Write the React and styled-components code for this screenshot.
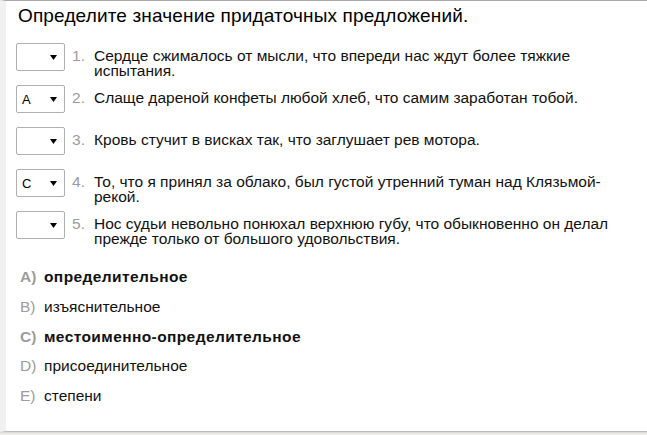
import React from 'react'
import styled, { createGlobalStyle } from 'styled-components'

const GlobalStyle = createGlobalStyle`
    html, body {
        margin: 0;
        padding: 0;
        background: #ffffff;
    }
    body {
        font-family: "Liberation Sans", Arial, sans-serif;
        color: #000;
    }
`

const questions = [
    { value: '', text: 'Сердце сжималось от мысли, что впереди нас ждут более тяжкие испытания.' },
    { value: 'A', text: 'Слаще дареной конфеты любой хлеб, что самим заработан тобой.' },
    { value: '', text: 'Кровь стучит в висках так, что заглушает рев мотора.' },
    { value: 'C', text: 'То, что я принял за облако, был густой утренний туман над Клязьмой-рекой.' },
    { value: '', text: 'Нос судьи невольно понюхал верхнюю губу, что обыкновенно он делал прежде только от большого удовольствия.' },
]

const answers = [
    { key: 'A', text: 'определительное', used: true },
    { key: 'B', text: 'изъяснительное', used: false },
    { key: 'C', text: 'местоименно-определительное', used: true },
    { key: 'D', text: 'присоединительное', used: false },
    { key: 'E', text: 'степени', used: false },
]

export default function App() {
    return (
        <>
            <GlobalStyle />
            <Page>
                <Panel>
                    <Title>Определите значение придаточных предложений.</Title>
                    <QuestionList>
                        {questions.map((q, i) => (
                            <QuestionRow key={i}>
                                <SelectBox>
                                    <SelectValue>{q.value}</SelectValue>
                                    <Arrow viewBox="0 0 7 5" width="7" height="5">
                                        <path d="M0 0 L7 0 L3.5 5 Z" fill="#000" />
                                    </Arrow>
                                </SelectBox>
                                <Number>{i + 1}.</Number>
                                <QuestionText>{q.text}</QuestionText>
                            </QuestionRow>
                        ))}
                    </QuestionList>
                    <AnswerList>
                        {answers.map(a => (
                            <AnswerRow key={a.key} $used={a.used}>
                                <AnswerKey>{a.key})</AnswerKey>
                                <span>{a.text}</span>
                            </AnswerRow>
                        ))}
                    </AnswerList>
                </Panel>
                <Footer />
            </Page>
        </>
    )
}

const Page = styled.div`
    height: 435px;
    display: flex;
    flex-direction: column;
    overflow: hidden;
`

const Panel = styled.div`
    flex: 1;
    border-top: 1px solid #a9a9a9;
    border-left: 6px solid #f1f1f1;
    border-bottom: 1px solid #bcbcbc;
    padding: 4px 0 0 12px;
`

const Footer = styled.div`
    height: 3px;
    background: linear-gradient(#dadada 0 1px, #ebebe3 1px);
`

const Title = styled.h1`
    margin: 0;
    font-size: 19px;
    letter-spacing: 0.15px;
    font-weight: 400;
    line-height: 22px;
`

const QuestionList = styled.div`
    margin-top: 16px;
    margin-left: -2px;
    display: flex;
    flex-direction: column;
    gap: 14px;
`

const QuestionRow = styled.div`
    display: flex;
    align-items: flex-start;
    min-height: 28px;
`

const SelectBox = styled.div`
    box-sizing: border-box;
    width: 49px;
    height: 28px;
    flex-shrink: 0;
    border: 1px solid #b0b0b0;
    border-radius: 2px;
    display: flex;
    align-items: center;
    justify-content: space-between;
    padding: 1px 7px 0 5px;
    font-size: 13px;
`

const SelectValue = styled.span`
    color: #000;
`

const Arrow = styled.svg`
    display: block;
    flex-shrink: 0;
`

const Number = styled.span`
    width: 22px;
    padding-left: 7px;
    flex-shrink: 0;
    color: #9c9c9c;
    font-size: 15.5px;
    line-height: 15px;
    margin-top: 5px;
`

const QuestionText = styled.span`
    width: 543px;
    font-size: 15.5px;
    line-height: 15px;
    margin-top: 5px;
    margin-bottom: -7px;
    color: #111;
`

const AnswerList = styled.div`
    margin-top: 29px;
    margin-left: 2px;
    display: flex;
    flex-direction: column;
    gap: 12.3px;
`

const AnswerRow = styled.div`
    display: flex;
    font-size: 15.5px;
    line-height: 17.5px;
    font-weight: ${({ $used }) => ($used ? 700 : 400)};
    letter-spacing: ${({ $used }) => ($used ? '0.4px' : '0')};
    color: #111;
`

const AnswerKey = styled.span`
    width: 24px;
    letter-spacing: 0;
    color: #9c9c9c;
`
